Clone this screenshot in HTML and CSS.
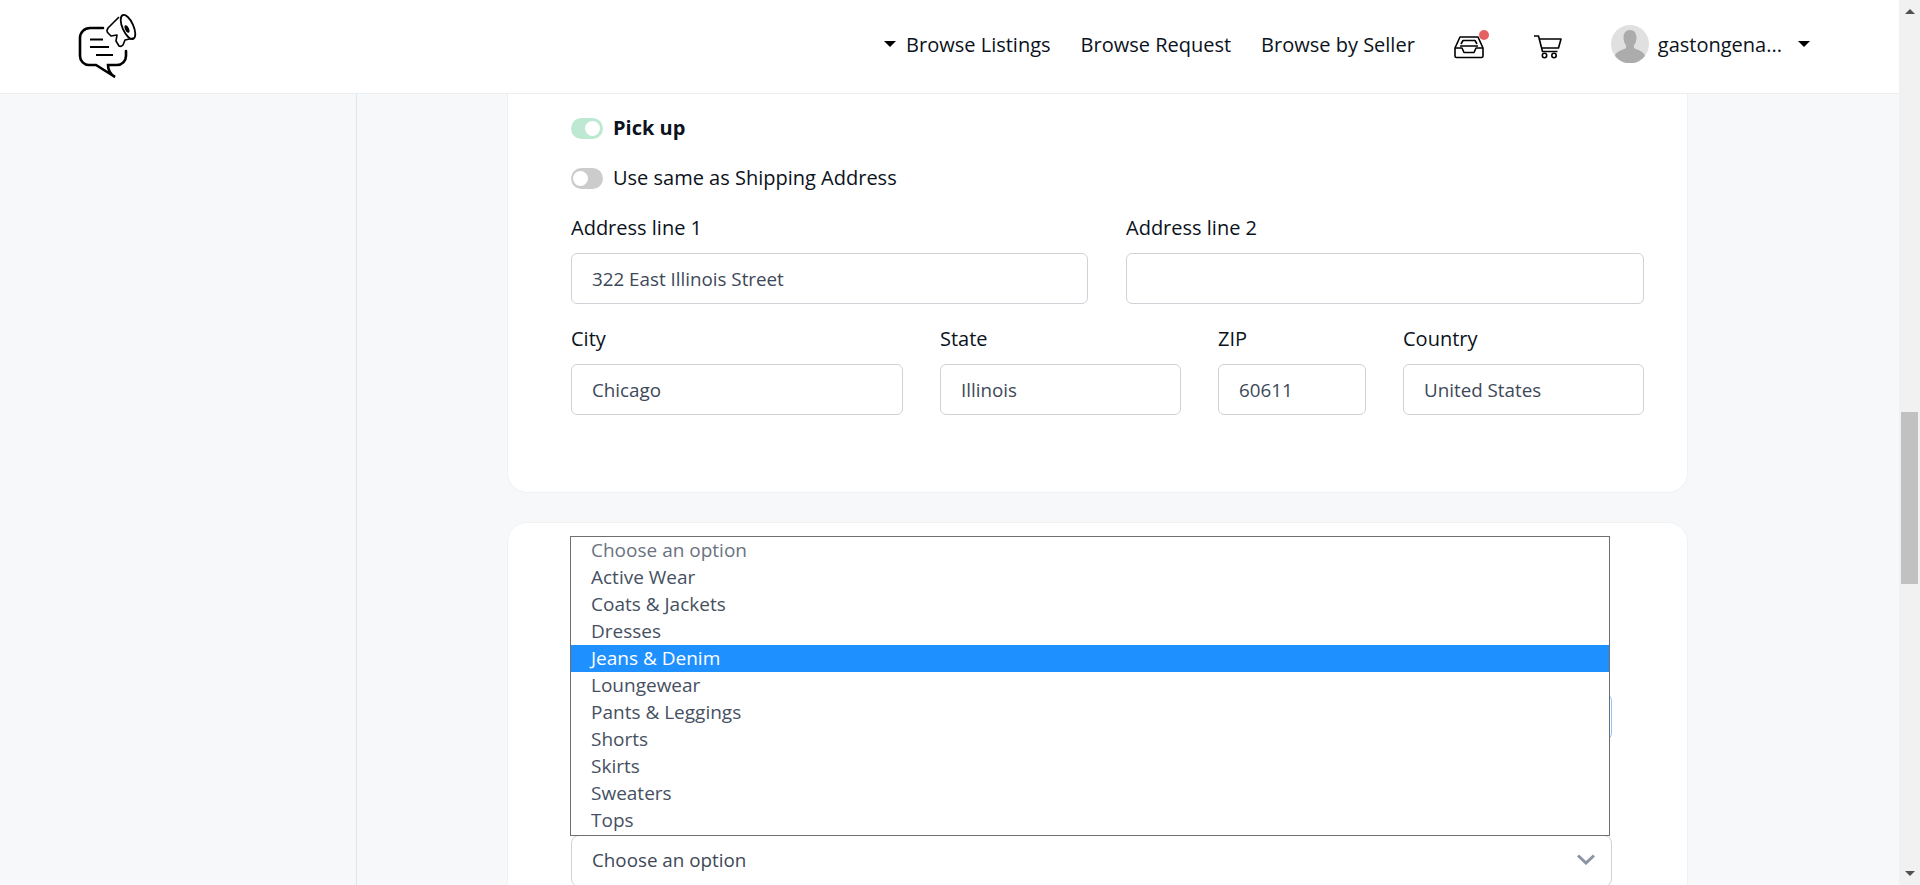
FILE: index.html

```html
<!DOCTYPE html>
<html lang="en">
<head>
    <meta charset="UTF-8">
    <meta name="viewport" content="width=device-width, initial-scale=1.0">
    <title>Edit listing</title>
    <link rel="stylesheet" href="styles.css">
</head>
<body>
    <div class="page">
        <header class="topbar">
            <a class="logo" href="#">
                <svg width="65" height="70" viewBox="75 10 65 70" fill="none" stroke="#000">
                    <path d="M103 28H90a10 10 0 0 0-10 10v18a9 9 0 0 0 9 9h7l19 12q-7-4-7-12h9a9 9 0 0 0 9-9v-5" stroke-width="2.6" stroke-linecap="round"/>
                    <path d="M90 39.500h13M90 47h19M96 55h17" stroke-width="2.2"/>
                    <path d="M119 17 108 28q-2 3 0 5l3 3 6-1-1 6 3 5q2 1 4-1l2-5 9-2" stroke-width="1.6" stroke-linejoin="round"/>
                    <ellipse cx="128" cy="27" rx="5.500" ry="13" transform="rotate(-24 128 27)" stroke-width="1.800"/>
                    <ellipse cx="127" cy="29" rx="2" ry="4" transform="rotate(-24 127 29)" fill="#000" stroke="none"/>
                </svg>
            </a>
            <nav class="nav">
                <a class="nav-link" href="#"><span class="caret"></span>Browse Listings</a>
                <a class="nav-link" href="#">Browse Request</a>
                <a class="nav-link" href="#">Browse by Seller</a>
                <a class="icon-link inbox" href="#">
                    <svg width="30" height="24" viewBox="0 0 30 24" fill="none" stroke="#000" stroke-width="1.600" stroke-linejoin="round">
                        <path d="M1 13 6 2h18l5 11v8a1.500 1.500 0 0 1-1.500 1.500h-25A1.500 1.500 0 0 1 1 21z"/>
                        <path d="M1 13h7l2 4.500h10l2-4.500h7"/>
                        <path d="M7 9 9 5.500h12l2 3.500M6 11h18"/>
                    </svg>
                    <span class="badge"></span>
                </a>
                <a class="icon-link cart" href="#">
                    <svg width="28" height="24" viewBox="0 0 28 24" fill="none" stroke="#000" stroke-width="1.600" stroke-linejoin="round">
                        <path d="M0 1h4.500l4 15.500h15"/>
                        <path d="M5.500 4H27l-2.500 9H8"/>
                        <circle cx="10.500" cy="20.500" r="2.200"/>
                        <circle cx="20" cy="20.500" r="2.200"/>
                    </svg>
                </a>
                <a class="user" href="#">
                    <svg class="avatar" width="38" height="38" viewBox="0 0 38 38">
                        <circle cx="19" cy="19" r="19" fill="#e0e0e0"/>
                        <path d="M19 5c4 0 6.500 3 6.500 7.500 0 3-1 6-2.500 8v2.500c3 2 10 3 11 8A19 19 0 0 1 4 31c1-5 8-6 11-8v-2.500c-1.500-2-2.500-5-2.500-8C12.500 8 15 5 19 5z" fill="#acacac"/>
                    </svg>
                    <span class="user-name">gastongena...</span>
                    <span class="caret"></span>
                </a>
            </nav>
        </header>

        <div class="layout">
            <aside class="sidebar"></aside>
            <main class="content">
                <section class="card card-address">
                    <div class="switch-row">
                        <span class="switch switch-on"></span>
                        <strong>Pick up</strong>
                    </div>
                    <div class="switch-row">
                        <span class="switch"></span>
                        <span>Use same as Shipping Address</span>
                    </div>
                    <div class="field-row row-two">
                        <div class="field">
                            <label>Address line 1</label>
                            <div class="input">322 East Illinois Street</div>
                        </div>
                        <div class="field">
                            <label>Address line 2</label>
                            <div class="input"></div>
                        </div>
                    </div>
                    <div class="field-row row-four">
                        <div class="field">
                            <label>City</label>
                            <div class="input">Chicago</div>
                        </div>
                        <div class="field">
                            <label>State</label>
                            <div class="input">Illinois</div>
                        </div>
                        <div class="field">
                            <label>ZIP</label>
                            <div class="input">60611</div>
                        </div>
                        <div class="field">
                            <label>Country</label>
                            <div class="input">United States</div>
                        </div>
                    </div>
                </section>

                <section class="card card-category">
                    <div class="select select-focus"></div>
                    <div class="select">
                        Choose an option
                        <svg class="chevron" width="18" height="11" viewBox="0 0 18 11" fill="none" stroke="#8a94a3" stroke-width="3">
                            <path d="M1 1.500 9 9l8-7.500"/>
                        </svg>
                    </div>
                    <ul class="option-list">
                        <li class="option-first">Choose an option</li>
                        <li>Active Wear</li>
                        <li>Coats &amp; Jackets</li>
                        <li>Dresses</li>
                        <li class="option-active">Jeans &amp; Denim</li>
                        <li>Loungewear</li>
                        <li>Pants &amp; Leggings</li>
                        <li>Shorts</li>
                        <li>Skirts</li>
                        <li>Sweaters</li>
                        <li>Tops</li>
                    </ul>
                </section>
            </main>
        </div>
    </div>

    <div class="scrollbar">
        <span class="arrow-up"></span>
        <div class="track"><div class="thumb"></div></div>
        <span class="arrow-down"></span>
    </div>
</body>
</html>
```

FILE: styles.css

```css
* {
    box-sizing: border-box;
}
html, body {
    height: 100%;
}
body {
    margin: 0;
    display: flex;
    overflow: hidden;
    font-family: "Open Sans", sans-serif;
    font-size: 20px;
    color: #0b1220;
    background: #f7f8fa;
}
a {
    color: inherit;
    text-decoration: none;
}
.page {
    flex: 1;
    min-width: 0;
    height: 885px;
    overflow: hidden;
}

/* top bar */
.topbar {
    height: 94px;
    display: flex;
    align-items: center;
    justify-content: space-between;
    padding: 0 89px 0 75px;
    background: #fff;
    border-bottom: 1px solid #eceef0;
}
.logo {
    display: flex;
    align-self: flex-start;
    margin-top: 10px;
}
.nav {
    display: flex;
    align-items: center;
    margin-top: -5px;
}
.nav-link {
    display: flex;
    align-items: center;
    margin-right: 30px;
}
.caret {
    width: 0;
    height: 0;
    border-left: 6.5px solid transparent;
    border-right: 6.5px solid transparent;
    border-top: 6px solid #000;
    margin-right: 10px;
}
.icon-link {
    display: flex;
    position: relative;
    margin-top: 5px;
}
.inbox {
    margin-left: 9px;
}
.cart {
    margin-left: 50px;
}
.badge {
    position: absolute;
    top: -5px;
    right: -5px;
    width: 10px;
    height: 10px;
    border-radius: 50%;
    background: #e56060;
}
.user {
    display: flex;
    align-items: center;
    margin-left: 49px;
}
.avatar {
    margin-right: 9px;
}
.user .caret {
    margin: 0 0 0 16px;
}

/* page columns */
.layout {
    display: flex;
}
.sidebar {
    width: 357px;
    flex: none;
    height: 791px;
    border-right: 1px solid #dde5ef;
}
.content {
    width: 1331px;
    padding-left: 150px;
}
.card {
    background: #fff;
    border: 1px solid #f0f1f3;
    border-radius: 20px;
}
.card-address {
    height: 399px;
    padding: 24px 43px 0 63px;
    border-top: 0;
    border-radius: 0 0 20px 20px;
}
.card-category {
    position: relative;
    height: 400px;
    margin-top: 29px;
    padding: 170px 75px 0 63px;
}

/* switches */
.switch-row {
    display: flex;
    align-items: center;
    height: 21px;
    margin-bottom: 29px;
}
.switch-row + .switch-row {
    margin-bottom: 26px;
}
.switch-row > :last-child {
    margin-top: -2px;
}
.switch {
    width: 32px;
    height: 21px;
    margin-right: 10px;
    border-radius: 11px;
    background: #ccc;
    position: relative;
}
.switch::after {
    content: "";
    position: absolute;
    top: 3px;
    left: 2px;
    width: 15px;
    height: 15px;
    border-radius: 50%;
    background: #fff;
}
.switch-on {
    background: #bde8d1;
}
.switch-on::after {
    left: 14px;
}

/* address fields */
.field-row {
    display: grid;
    column-gap: 37px;
    margin-bottom: 22px;
}
.row-two {
    grid-template-columns: 517px 518px;
    column-gap: 38px;
}
.row-four {
    grid-template-columns: 332px 241px 148px 241px;
}
.field label {
    display: block;
    line-height: 25px;
    margin-bottom: 13px;
}
.input {
    height: 51px;
    padding: 0 20px;
    line-height: 50px;
    font-size: 18.8px;
    color: #3d4858;
    border: 1px solid #cfd2d6;
    border-radius: 6px;
}

/* selects */
.select {
    position: relative;
    height: 52px;
    padding: 0 20px;
    line-height: 48px;
    font-size: 18.8px;
    color: #3d4858;
    border: 1px solid #cfd2d6;
    border-radius: 8px;
}
.select-focus {
    height: 48px;
    margin-bottom: 94px;
    border-color: #90c8f8;
}
.chevron {
    position: absolute;
    top: 18px;
    right: 16px;
}
.option-list {
    position: absolute;
    top: 13px;
    left: 62px;
    width: 1040px;
    margin: 0;
    padding: 0 0 1px;
    list-style: none;
    background: #fff;
    border: 1px solid #6f6f6f;
}
.option-list li {
    height: 27px;
    padding: 0 20px;
    line-height: 26px;
    font-size: 19px;
    color: #465062;
}
.option-list .option-first {
    color: #6b7280;
}
.option-list .option-active {
    color: #fff;
    background: #1e90ff;
}

/* page scrollbar */
.scrollbar {
    width: 21px;
    flex: none;
    height: 885px;
    padding: 0 2px;
    display: flex;
    flex-direction: column;
    align-items: center;
    background: #f1f1f1;
}
.track {
    flex: 1;
    width: 100%;
}
.thumb {
    width: 17px;
    height: 172px;
    margin: 398px 0 0;
    background: #c1c1c1;
}
.arrow-up {
    width: 0;
    height: 0;
    margin-top: 9px;
    border-left: 5px solid transparent;
    border-right: 5px solid transparent;
    border-bottom: 5px solid #505050;
}
.arrow-down {
    width: 0;
    height: 0;
    margin-bottom: 9px;
    border-left: 5px solid transparent;
    border-right: 5px solid transparent;
    border-top: 5px solid #505050;
}
```
